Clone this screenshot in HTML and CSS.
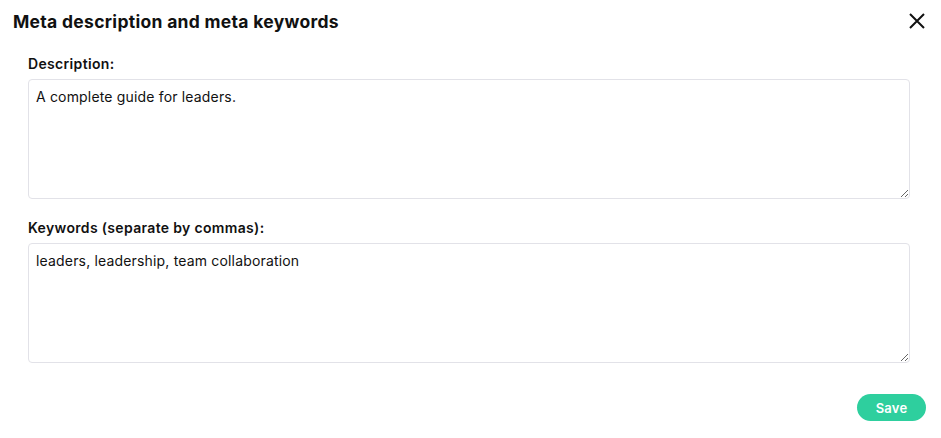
FILE: index.html
```html
<!DOCTYPE html>
<html lang="en">
<head>
    <meta charset="UTF-8">
    <meta name="viewport" content="width=device-width, initial-scale=1.0">
    <title>Meta description and meta keywords</title>
    <link rel="stylesheet" href="styles.css">
</head>
<body>

    <div class="modal">
        <!-- Header with title and close button -->
        <div class="modal-header">
            <h2 class="modal-title">Meta description and meta keywords</h2>
            <button class="close-btn" aria-label="Close">
                <svg width="18" height="18" viewBox="0 0 18 18">
                    <path d="M2 2 L16 16 M16 2 L2 16" stroke="#111" stroke-width="2" fill="none"/>
                </svg>
            </button>
        </div>

        <!-- Form fields -->
        <div class="modal-body">
            <label class="field-label" for="description">Description:</label>
            <textarea id="description" class="field-input">A complete guide for leaders.</textarea>

            <label class="field-label" for="keywords">Keywords (separate by commas):</label>
            <textarea id="keywords" class="field-input">leaders, leadership, team collaboration</textarea>
        </div>

        <div class="modal-footer">
            <button class="save-btn">Save</button>
        </div>
    </div>

</body>
</html>
```

FILE: styles.css
```css
body, html {
    margin: 0;
    padding: 0;
    background-color: #fff;
    font-family: "Inter", "Noto Sans", sans-serif;
    color: #111;
}

.modal {
    display: flex;
    flex-direction: column;
    padding: 10px 15px 0 13px;
}

.modal-header {
    display: flex;
    align-items: center;
    justify-content: space-between;
    height: 22px;
}

.modal-title {
    margin: 0;
    font-size: 17.5px;
    font-weight: 700;
    letter-spacing: 0.3px;
}

.close-btn {
    background-color: transparent;
    border: none;
    padding: 0;
    cursor: pointer;
    display: flex;
}

.modal-body {
    display: flex;
    flex-direction: column;
    padding: 23px 16px 0 15px;
}

.field-label {
    font-size: 14px;
    font-weight: 600;
    letter-spacing: 0.33px;
    margin-bottom: 7px;
    line-height: 17px;
}

.field-input {
    height: 120px;
    box-sizing: border-box;
    border: 1px solid #e2e2e8;
    border-radius: 4px;
    padding: 8px 7px;
    font-family: inherit;
    font-size: 14px;
    letter-spacing: 0.17px;
    color: #111;
    margin-bottom: 20px;
    resize: vertical;
}

.modal-footer {
    display: flex;
    justify-content: flex-end;
    padding-top: 11px;
}

.save-btn {
    background-color: #2ecf9e;
    color: #fff;
    border: none;
    border-radius: 14px;
    width: 69px;
    height: 27px;
    font-family: inherit;
    font-size: 13px;
    font-weight: 600;
    letter-spacing: 0.2px;
    cursor: pointer;
}
```
